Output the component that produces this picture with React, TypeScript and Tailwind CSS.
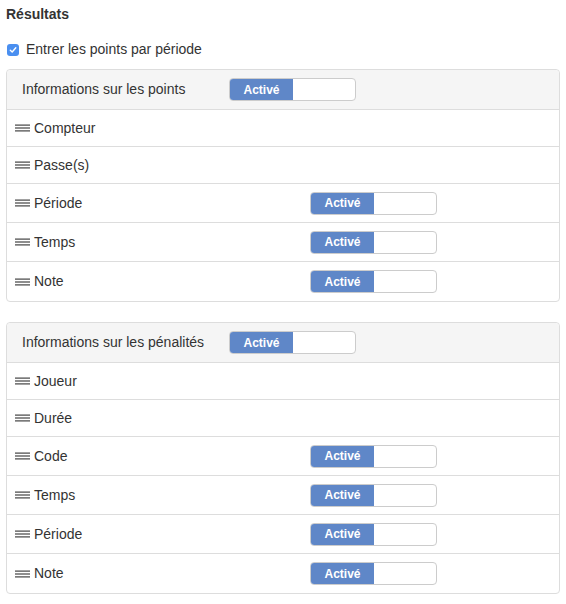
import React from 'react';

function Toggle() {
  return (
    <div className="flex h-[23px] w-[127px] overflow-hidden rounded-[4px] border border-[#cccccc] bg-white">
      <div className="flex w-[63px] items-center justify-center bg-[#5f87c8] text-[12px] font-bold text-white">
        Activé
      </div>
      <div className="flex-1" />
    </div>
  );
}

function Grip() {
  return (
    <svg width="15" height="8" viewBox="0 0 15 8" className="mr-[4px] shrink-0">
      <rect x="0" y="0.5" width="15" height="1.2" fill="#444" />
      <rect x="0" y="3.4" width="15" height="1.2" fill="#444" />
      <rect x="0" y="6.3" width="15" height="1.2" fill="#444" />
    </svg>
  );
}

type Row = { label: string; toggle: boolean };

function Panel({ title, rows }: { title: string; rows: Row[] }) {
  return (
    <div className="mx-[6px] rounded-[4px] border border-[#dddddd] bg-white">
      {/* Header */}
      <div className="flex h-[40px] items-center rounded-t-[4px] border-b border-[#dddddd] bg-[#f5f5f5] pl-[15px]">
        <span className="w-[207px]">{title}</span>
        <Toggle />
      </div>
      {rows.map((r, i) => (
        <div
          key={i}
          className={`flex items-center pl-[8px] ${r.toggle ? 'h-[39px]' : 'h-[37px]'} ${i < rows.length - 1 ? 'border-b border-[#dddddd]' : ''}`}
        >
          <Grip />
          <span className="w-[276px]">{r.label}</span>
          {r.toggle && <Toggle />}
        </div>
      ))}
    </div>
  );
}

export default function App() {
  const points: Row[] = [
    { label: 'Compteur', toggle: false },
    { label: 'Passe(s)', toggle: false },
    { label: 'Période', toggle: true },
    { label: 'Temps', toggle: true },
    { label: 'Note', toggle: true },
  ];
  const penalites: Row[] = [
    { label: 'Joueur', toggle: false },
    { label: 'Durée', toggle: false },
    { label: 'Code', toggle: true },
    { label: 'Temps', toggle: true },
    { label: 'Période', toggle: true },
    { label: 'Note', toggle: true },
  ];

  return (
    <div className="h-[604px] w-[566px] bg-white font-['Liberation_Sans',Arial,sans-serif] text-[14px] text-[#333333]">
      <div className="px-[6px] pt-[6px] text-[14px] font-bold leading-[16px]">Résultats</div>
      <div className="mt-[17px] flex items-center px-[7px]">
        <span className="flex h-[12px] w-[12px] items-center justify-center rounded-[3px] bg-[#4a8ff0]">
          <svg width="8" height="8" viewBox="0 0 8 8">
            <path d="M1.3 4.2 L3.2 6 L6.8 1.8" stroke="white" strokeWidth="1.4" fill="none" strokeLinecap="round" strokeLinejoin="round" />
          </svg>
        </span>
        <span className="ml-[7px]">Entrer les points par période</span>
      </div>
      <div className="mt-[9px]">
        <Panel title="Informations sur les points" rows={points} />
      </div>
      <div className="mt-[20px]">
        <Panel title="Informations sur les pénalités" rows={penalites} />
      </div>
    </div>
  );
}
